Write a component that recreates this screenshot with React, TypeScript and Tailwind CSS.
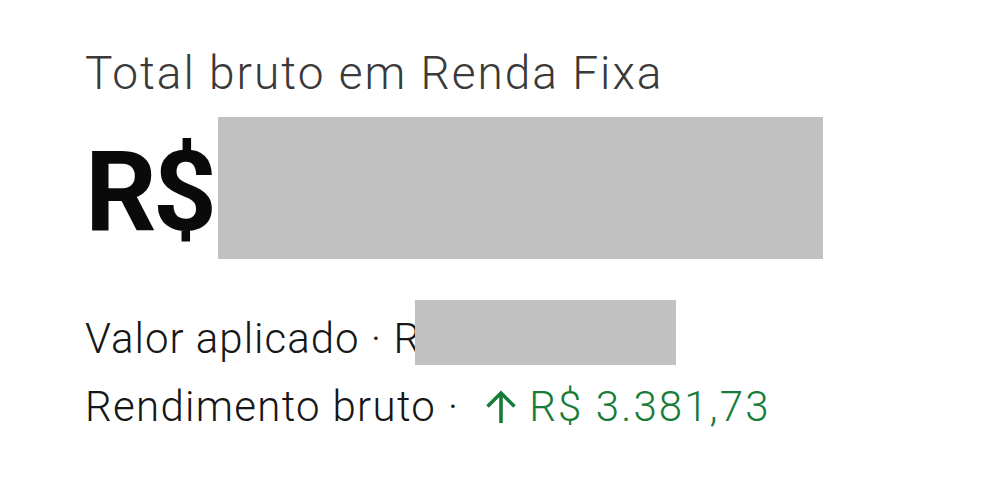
export default function App() {
  return (
    <div className="w-[1000px] h-[483px] bg-white overflow-hidden" style={{ fontFamily: "Roboto, sans-serif" }}>
      <div className="pl-[85px] pt-[50px]">
        <div className="text-[46px] leading-none font-light text-[#3a3a3a] tracking-[2px] whitespace-nowrap">
          Total bruto em Renda Fixa
        </div>

        <div className="flex items-start mt-[21px]">
          <div className="w-[133px] text-[112px] leading-none font-bold text-[#0a0a0a] tracking-[-4px] mt-[19px] whitespace-nowrap">
            R$
          </div>
          <div className="w-[605px] h-[142px] bg-[#c1c1c1]" />
        </div>

        {/* valor aplicado: the grey redaction block sits on top of the amount */}
        <div className="flex items-start mt-[41px]">
          <div className="w-[330px] shrink-0 whitespace-nowrap text-[42px] leading-none font-light text-[#161616] tracking-[1px] mt-[18px]">
            Valor aplicado · R$
          </div>
          <div className="relative z-10 w-[261px] h-[65px] bg-[#c1c1c1]" />
        </div>

        <div className="flex items-center mt-[21px] text-[42px] leading-none font-light text-[#161616] tracking-[1.3px] whitespace-nowrap">
          <span>Rendimento bruto ·</span>
          <span className="ml-[26px] flex items-center text-[#177c37]">
            <svg width="32" height="34" viewBox="0 0 32 34" fill="none" stroke="currentColor" strokeWidth="3.6" strokeLinecap="butt">
              <path d="M16 33V3M2.5 16.5L16 3l13.5 13.5" />
            </svg>
            <span className="ml-[12px] tracking-[2.1px]">R$ 3.381,73</span>
          </span>
        </div>
      </div>
    </div>
  );
}
